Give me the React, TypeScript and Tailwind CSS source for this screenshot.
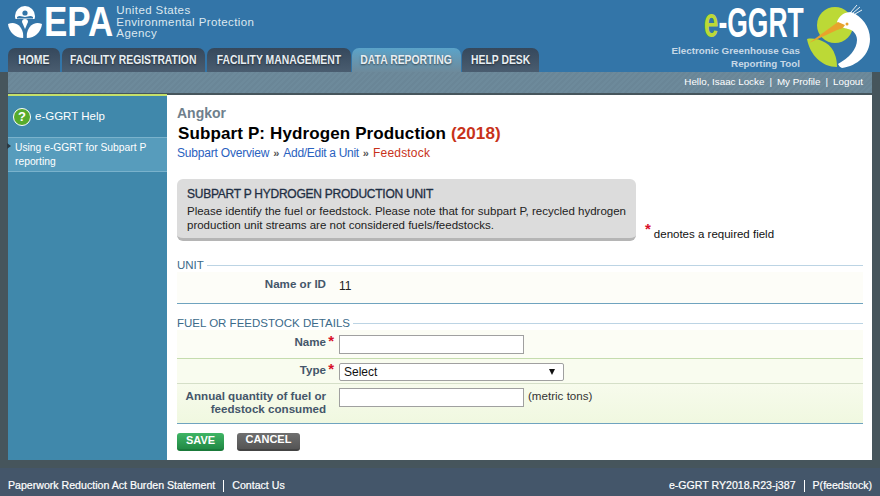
const tabs = [
  { label: 'HOME', cls: 'w-[52px] mr-[2px]' },
  { label: 'FACILITY REGISTRATION', cls: 'w-[143px] mr-[2px]' },
  { label: 'FACILITY MANAGEMENT', cls: 'w-[144px] mr-px' },
  { label: 'DATA REPORTING', cls: 'w-[109px] mr-px', active: true },
  { label: 'HELP DESK', cls: 'w-[77px]' },
];

function EpaSeal() {
  return (
    <svg width="34" height="34" viewBox="0 0 34 34" className="shrink-0">
      <path d="M17 1a10 10 0 0 1 10 10c0 1-.2 2-.5 3H7.500C7.200 13 7 12 7 11A10 10 0 0 1 17 1z" fill="#fff" />
      <circle cx="17" cy="8" r="2.600" fill="#3375a8" />
      <path d="M9 12c3-2 5 0 8 0s5-2 8 0v1.500H9z" fill="#3375a8" />
      <path d="M0 19c6-3 13 0 15 9 .3 2 .2 5 .2 5C7 33 1 27 0 19z" fill="#fff" />
      <path d="M34 19c-6-3-13 0-15 9-.3 2-.2 5-.2 5C27 33 33 27 34 19z" fill="#fff" />
      <path d="M14 17a3 3 0 0 1 6 0l-3 7z" fill="#fff" />
    </svg>
  );
}

function Heron() {
  return (
    <svg width="64" height="66" viewBox="0 0 64 66" className="shrink-0">
      <circle cx="28" cy="22" r="18" fill="#bcd936" />
      <path d="M0 36C10 34 25 40 28 52C30 57 30 62 30 64C15 64 3 52 0 36Z" fill="#bcd936" />
      <path d="M44 9L50 2M46 10L53 4M48 11L55 7" stroke="#e8f0f4" strokeWidth="1" fill="none" />
      <path d="M30 19C32 13 37 9 44 9C55 13 63 24 63 36C63 52 50 63 35 65C33 64 32 63 31 61C42 55 50 46 50 37C50 31 46 27 41 26C37 25 33 24 30 19Z" fill="#fff" />
      <path d="M2 40L31 19L38 22C36 26 33 26 30 27Z" fill="#e8a32c" />
      <circle cx="40" cy="21" r="1.500" fill="#e8a32c" />
    </svg>
  );
}

function Req() {
  return <span className="text-[#d8112a] text-[15px] font-bold leading-none">*</span>;
}

function Legend({ children }: { children: React.ReactNode }) {
  return (
    <div className="flex items-center gap-[3px] h-[13px] text-[11.500px] leading-[13px] text-[#3b6a8a]">
      <span className="whitespace-nowrap">{children}</span>
      <div className="flex-1 h-px bg-[#bcd4e4]" />
    </div>
  );
}

export default function App() {
  return (
    <div className="w-[880px] h-[496px] overflow-hidden flex flex-col bg-[#46555c] font-['Liberation_Sans',Arial,sans-serif]">
      {/* header */}
      <header className="h-[72px] shrink-0 bg-[#3375a8] flex justify-between">
        <div className="flex flex-col">
          <div className="h-[48px] flex items-start pl-[8px] pt-[5px]">
            <EpaSeal />
            <span className="inline-block ml-[2px] mr-[-6px] -mt-[5px] text-[38px] leading-[44px] font-bold text-white origin-left scale-x-[0.92] scale-y-[1.1]">EPA</span>
            <div className="ml-[3px] text-[11.500px] leading-[11.500px] text-[#dce8f0] tracking-[0.4px]">
              <div>United States</div>
              <div>Environmental Protection</div>
              <div>Agency</div>
            </div>
          </div>
          <nav className="h-[24px] flex pl-[8px]">
            {tabs.map((t) => (
              <div
                key={t.label}
                className={`${t.cls} h-[24px] rounded-t-[7px] flex items-center justify-center text-[12.500px] font-bold text-[#e8eef2] whitespace-nowrap [text-shadow:0_1px_2px_rgba(0,0,0,0.5)] ${
                  t.active ? 'bg-gradient-to-b from-[#5aa3c9] to-[#6d8a9b]' : 'bg-gradient-to-b from-[#35485c] to-[#4a5d70]'
                }`}
              >
                <span className="scale-x-[0.83]">{t.label}</span>
              </div>
            ))}
          </nav>
        </div>
        <div className="flex items-start pt-[3px] pr-[9px]">
          <div className="flex flex-col items-end">
            <div className="h-[40px] flex items-center text-[42px] leading-[40px] font-bold scale-x-[0.63] origin-right">
              <span className="text-[#bcd936]">e</span>
              <span className="text-white">-GGRT</span>
            </div>
            <div className="mt-[1px] mr-[4px] text-[9.800px] leading-[13px] font-bold text-[#c6d8e6] text-right">
              <div>Electronic Greenhouse Gas</div>
              <div>Reporting Tool</div>
            </div>
          </div>
          <div className="ml-[3px]">
            <Heron />
          </div>
        </div>
      </header>

      {/* utility bar */}
      <div className="mx-[8px] h-[21px] shrink-0 bg-[repeating-linear-gradient(135deg,#6d8a9b_0,#6d8a9b_2px,#6a8697_2px,#6a8697_4px)] flex items-center justify-end pr-[9px] text-[9.800px] text-white gap-[5px]">
        <span>Hello, Isaac Locke</span>
        <span>|</span>
        <span>My Profile</span>
        <span>|</span>
        <span>Logout</span>
      </div>

      {/* body */}
      <div className="mx-[8px] mt-[2px] h-[365px] shrink-0 flex">
        <aside className="w-[159px] shrink-0 bg-[#4088ab] border-t-2 border-[#c5e06a] -mt-[1px]">
          <div className="h-[41px] flex items-center pl-[5px] gap-[4px]">
            <div className="w-[18px] h-[18px] rounded-full bg-[#57ab2c] border border-white flex items-center justify-center text-white text-[13px] font-bold leading-none">?</div>
            <span className="text-[11.500px] text-white">e-GGRT Help</span>
          </div>
          <div className="relative h-[35px] bg-[#579cbc] border-y border-[#7ab2cc] px-[7px] py-[3px] text-[10.300px] leading-[14px] text-white">
            <div className="absolute -left-[1px] top-[5px] border-y-[3px] border-l-[4px] border-y-transparent border-l-[#2a3a44]" />
            Using e-GGRT for Subpart P reporting
          </div>
        </aside>

        <main className="flex-1 bg-white pl-[10px] pr-[9px] flex flex-col">
          <div className="pt-[10px] text-[14px] leading-[16px] font-bold text-[#6f7f8c]">Angkor</div>
          <h1 className="mt-[3px] ml-px text-[17px] leading-[20px] font-bold text-black tracking-[0.12px]">
            Subpart P: Hydrogen Production <span className="text-[#c8321a]">(2018)</span>
          </h1>
          <div className="mt-[2px] flex items-center text-[12px] leading-[14px]">
            <span className="text-[#2a62c0] tracking-[-0.2px]">Subpart Overview</span>
            <span className="mx-[4px] text-[11px] font-bold text-[#555]">»</span>
            <span className="text-[#2a62c0] tracking-[-0.3px]">Add/Edit a Unit</span>
            <span className="mx-[4px] text-[11px] font-bold text-[#555]">»</span>
            <span className="text-[#c8321a] tracking-[0.2px]">Feedstock</span>
          </div>

          <div className="mt-[19px] flex items-end">
            <div className="w-[459px] h-[62px] shrink-0 rounded-[6px] bg-[#dcdcdc] border-b-[3px] border-[#b5b5b5] pt-[8px] pl-[10px] pr-[6px] text-[11.500px] leading-[14px] text-[#222]">
              <div className="text-[12px] text-[#1f2f44] tracking-[-0.25px] [-webkit-text-stroke:0.3px_#1f2f44]">SUBPART P HYDROGEN PRODUCTION UNIT</div>
              <div className="mt-[3px]">
                Please identify the fuel or feedstock. Please note that for subpart P, recycled hydrogen production unit streams are not considered fuels/feedstocks.
              </div>
            </div>
            <div className="ml-[9px] text-[11.500px] leading-[14px] text-[#111] flex">
              <span className="-mt-[3px] mr-[3px]"><Req /></span>
              <span className="mt-[3px]">denotes a required field</span>
            </div>
          </div>

          <div className="mt-[18px]">
            <Legend>UNIT</Legend>
          </div>
          <div className="h-[31px] bg-[#fdfdf8] border-b border-[#6fa3bf] flex items-start box-content">
            <div className="w-[149px] pt-[5px] text-right text-[11.600px] font-bold leading-[14px] text-[#44566a]">Name or ID</div>
            <div className="ml-[13px] pt-[7px] text-[12px] leading-[14px] text-[#222]">11</div>
          </div>

          <div className="mt-[13px]">
            <Legend>FUEL OR FEEDSTOCK DETAILS</Legend>
          </div>
          <div className="h-[28px] bg-[#fcfdf5] border-b border-[#c5dcae] flex items-start box-content">
            <div className="w-[149px] pt-[5px] flex justify-end text-[11.600px] font-bold leading-[14px] text-[#44566a] relative">
              Name
              <div className="absolute right-[-8px] top-[3px]"><Req /></div>
            </div>
            <div className="ml-[13px] mt-[5px] w-[185px] h-[19px] bg-white border border-[#a0a0a0]" />
          </div>
          <div className="h-[24px] bg-[#f9fcef] border-b border-[#d5dfc8] flex items-start box-content">
            <div className="w-[149px] pt-[4px] flex justify-end text-[11.600px] font-bold leading-[14px] text-[#44566a] relative">
              Type
              <div className="absolute right-[-8px] top-[2px]"><Req /></div>
            </div>
            <div className="ml-[13px] mt-[4px] w-[225px] h-[18px] bg-white border border-[#a0a0a0] rounded-[2px] flex items-center justify-between pl-[4px] pr-[8px] text-[12px] text-[#111]">
              <span>Select</span>
              <span className="w-0 h-0 border-x-[3.500px] border-t-[6px] border-x-transparent border-t-[#111]" />
            </div>
          </div>
          <div className="h-[39px] bg-gradient-to-b from-[#f7fbec] to-[#f0f8e0] border-b border-[#6fa3bf] flex items-start box-content">
            <div className="w-[149px] pt-[5px] text-right text-[11.600px] font-bold leading-[13px] text-[#44566a]">
              Annual quantity of fuel or feedstock consumed
            </div>
            <div className="ml-[13px] mt-[4px] w-[185px] h-[19px] bg-white border border-[#a0a0a0]" />
            <span className="ml-[4px] mt-[5px] text-[11.600px] leading-[14px] text-[#333]">(metric tons)</span>
          </div>

          <div className="mt-[9px] flex gap-[13px]">
            <button className="w-[47px] h-[18px] rounded-[3px] bg-gradient-to-b from-[#3fb565] to-[#218a45] border-b-2 border-[#1a7a3a] text-white text-[11px] font-bold leading-none pb-[2px]">SAVE</button>
            <button className="w-[63px] h-[18px] rounded-[3px] bg-gradient-to-b from-[#6f6f6f] to-[#555] border-b-2 border-[#444] text-white text-[11px] font-bold leading-none pb-[3px]">CANCEL</button>
          </div>
        </main>
      </div>

      {/* footer */}
      <footer className="mt-[8px] flex-1 bg-[#44566a] flex items-center justify-between px-[8px] pt-[8px] text-[10.600px] text-white [-webkit-text-stroke:0.2px_white]">
        <div className="flex items-center">
          <span>Paperwork Reduction Act Burden Statement</span>
          <div className="w-px h-[12px] bg-white mx-[8px]" />
          <span>Contact Us</span>
        </div>
        <div className="flex items-center">
          <span>e-GGRT RY2018.R23-j387</span>
          <div className="w-px h-[12px] bg-white mx-[8px]" />
          <span>P(feedstock)</span>
        </div>
      </footer>
    </div>
  );
}
